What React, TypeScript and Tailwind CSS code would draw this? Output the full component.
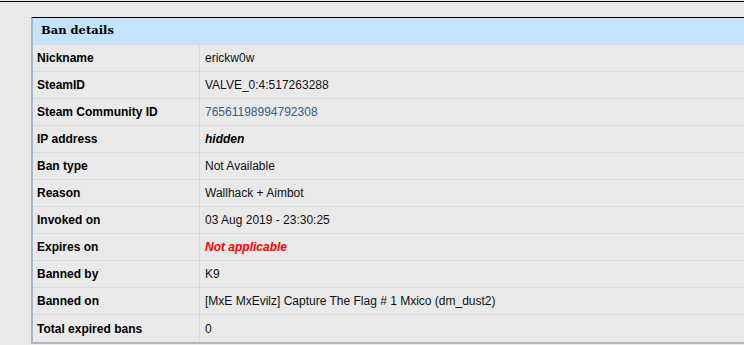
const ROWS: { label: string; value: string; kind?: 'link' | 'hidden' | 'red' }[] = [
  { label: 'Nickname', value: 'erickw0w' },
  { label: 'SteamID', value: 'VALVE_0:4:517263288' },
  { label: 'Steam Community ID', value: '76561198994792308', kind: 'link' },
  { label: 'IP address', value: 'hidden', kind: 'hidden' },
  { label: 'Ban type', value: 'Not Available' },
  { label: 'Reason', value: 'Wallhack + Aimbot' },
  { label: 'Invoked on', value: '03 Aug 2019 - 23:30:25' },
  { label: 'Expires on', value: 'Not applicable', kind: 'red' },
  { label: 'Banned by', value: 'K9' },
  { label: 'Banned on', value: '[MxE MxEvilz] Capture The Flag # 1 Mxico (dm_dust2)' },
  { label: 'Total expired bans', value: '0' },
];

function valueClass(kind?: string) {
  if (kind === 'link') return 'text-[#3b5b83]';
  if (kind === 'hidden') return 'font-bold italic text-black';
  if (kind === 'red') return 'font-bold italic text-[#ff0000]';
  return 'text-[#111]';
}

export default function App() {
  return (
    <div className="min-h-[345px] bg-[#e9e9e9] pt-px font-['Liberation_Sans',Arial,sans-serif] text-[12px]">
      <div className="h-px bg-black" />
      <div className="pl-[31px] pt-[15px]">
        <div className="border-t border-t-black border-l-2 border-l-[#a9b8c9] border-b-2 border-b-[#a9b8c9]">
          <div className="h-[27px] bg-[#c4e4fd] border-b border-[#d4dbe7] pl-2 flex items-center font-['DejaVu_Serif',serif] font-bold text-[11.5px] text-black">
            Ban details
          </div>
          {ROWS.map((row) => (
            <div key={row.label} className="flex h-[27px] border-b border-[#d4dbe7] last:border-b-0">
              <div className="w-[167px] shrink-0 border-r border-[#d4dbe7] pl-1 flex items-center font-bold text-black">
                {row.label}
              </div>
              <div className={`pl-[5px] flex items-center ${valueClass(row.kind)}`}>{row.value}</div>
            </div>
          ))}
        </div>
      </div>
    </div>
  );
}
